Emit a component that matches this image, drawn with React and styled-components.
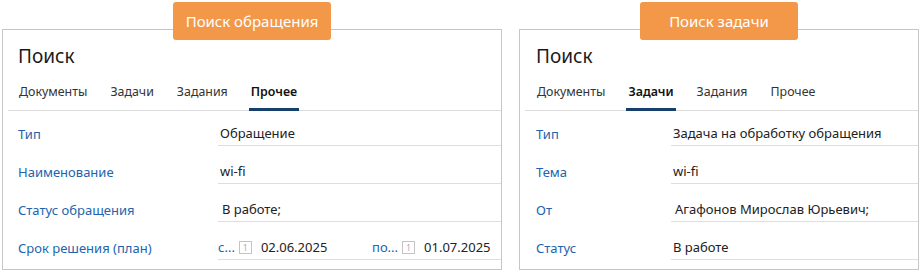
import React from 'react'
import styled, { createGlobalStyle } from 'styled-components'

const Global = createGlobalStyle`
  html, body {
    margin: 0;
    padding: 0;
    background: #fff;
  }
  body {
    font-family: "Noto Sans", "Open Sans", sans-serif;
    color: #222;
  }
`

const Page = styled.div`
  display: flex;
  align-items: flex-start;
  gap: 17px;
  padding: 29px 0 0 2px;
  width: 919px;
  box-sizing: border-box;
`

const Panel = styled.div`
  position: relative;
  width: ${p => p.$width}px;
  height: 241px;
  box-sizing: border-box;
  border: 1px solid #c6c6c6;
  display: flex;
  flex-direction: column;
`

const Badge = styled.div`
  position: absolute;
  top: -28px;
  left: 50%;
  transform: translateX(-50%);
  width: 158px;
  height: 38px;
  border-radius: 3px;
  background: #f39848;
  color: #fff;
  font-size: 15px;
  display: flex;
  align-items: center;
  justify-content: center;
`

const Title = styled.h2`
  margin: 0;
  padding: 13px 0 0 ${p => p.$pad}px;
  font-size: 19px;
  font-weight: 400;
  line-height: 26px;
  color: #1b1b1b;
`

const Tabs = styled.div`
  display: flex;
  gap: 19px;
  margin: 4px 0 0 5px;
  padding: 0 0 0 ${p => p.$pad}px;
  height: 37px;
  align-items: flex-end;
  border-bottom: 1px solid #dcdcdc;
`

const Tab = styled.div`
  position: relative;
  padding: 0 2px 10px;
  font-size: 12.4px;
  line-height: 17px;
  color: ${p => (p.$active ? '#111' : '#333')};
  font-weight: ${p => (p.$active ? 600 : 400)};
  &::after {
    content: '';
    display: ${p => (p.$active ? 'block' : 'none')};
    position: absolute;
    left: 0;
    right: 0;
    bottom: -1px;
    height: 3px;
    background: #173f6c;
  }
`

const Fields = styled.div`
  display: flex;
  flex-direction: column;
  gap: 14px;
  padding: 11px 0 0 ${p => p.$pad}px;
`

const Row = styled.div`
  display: grid;
  grid-template-columns: ${p => p.$label}px 1fr;
  align-items: center;
  height: 24px;
`

const Label = styled.div`
  font-size: 13px;
  color: #2263ad;
  white-space: nowrap;
`

const Value = styled.div`
  height: 24px;
  box-sizing: border-box;
  border-bottom: 1px solid #dedede;
  padding: 0 0 0 ${p => p.$indent || 2}px;
  font-size: 13px;
  line-height: 23px;
  color: #222;
  white-space: nowrap;
  overflow: hidden;
`

const DateValue = styled(Value)`
  display: grid;
  grid-template-columns: 154px 1fr;
  padding: 0;
`

const DatePart = styled.div`
  display: flex;
  align-items: center;
`

const DatePrefix = styled.span`
  color: #2263ad;
  margin-right: 4px;
`

const CalIcon = styled.span`
  display: inline-flex;
  align-items: center;
  justify-content: center;
  width: 11px;
  height: 11px;
  border: 1px solid #c4c4c4;
  font-size: 8px;
  line-height: 1;
  color: #aaa;
  margin-right: 9px;
`

const DateField = ({ prefix, value }) => (
  <DatePart>
    <DatePrefix>{prefix}</DatePrefix>
    <CalIcon>1</CalIcon>
    {value}
  </DatePart>
)

const SearchPanel = ({ badge, width, pad, labelWidth, active, rows }) => (
  <Panel $width={width}>
    <Badge>{badge}</Badge>
    <Title $pad={pad}>Поиск</Title>
    <Tabs $pad={pad - 6}>
      {['Документы', 'Задачи', 'Задания', 'Прочее'].map(t => (
        <Tab key={t} $active={t === active}>{t}</Tab>
      ))}
    </Tabs>
    <Fields $pad={pad}>
      {rows.map(r => (
        <Row key={r.label} $label={labelWidth}>
          <Label>{r.label}</Label>
          {r.dates ? (
            <DateValue>
              <DateField prefix="с..." value={r.dates[0]} />
              <DateField prefix="по..." value={r.dates[1]} />
            </DateValue>
          ) : (
            <Value $indent={r.indent}>{r.value}</Value>
          )}
        </Row>
      ))}
    </Fields>
  </Panel>
)

export default function App() {
  return (
    <>
      <Global />
      <Page>
        <SearchPanel
          badge="Поиск обращения"
          width={500}
          pad={15}
          labelWidth={200}
          active="Прочее"
          rows={[
            { label: 'Тип', value: 'Обращение' },
            { label: 'Наименование', value: 'wi-fi' },
            { label: 'Статус обращения', value: 'В работе;', indent: 4 },
            { label: 'Срок решения (план)', dates: ['02.06.2025', '01.07.2025'] },
          ]}
        />
        <SearchPanel
          badge="Поиск задачи"
          width={400}
          pad={16}
          labelWidth={135}
          active="Задачи"
          rows={[
            { label: 'Тип', value: 'Задача на обработку обращения' },
            { label: 'Тема', value: 'wi-fi' },
            { label: 'От', value: 'Агафонов Мирослав Юрьевич;', indent: 4 },
            { label: 'Статус', value: 'В работе' },
          ]}
        />
      </Page>
    </>
  )
}
